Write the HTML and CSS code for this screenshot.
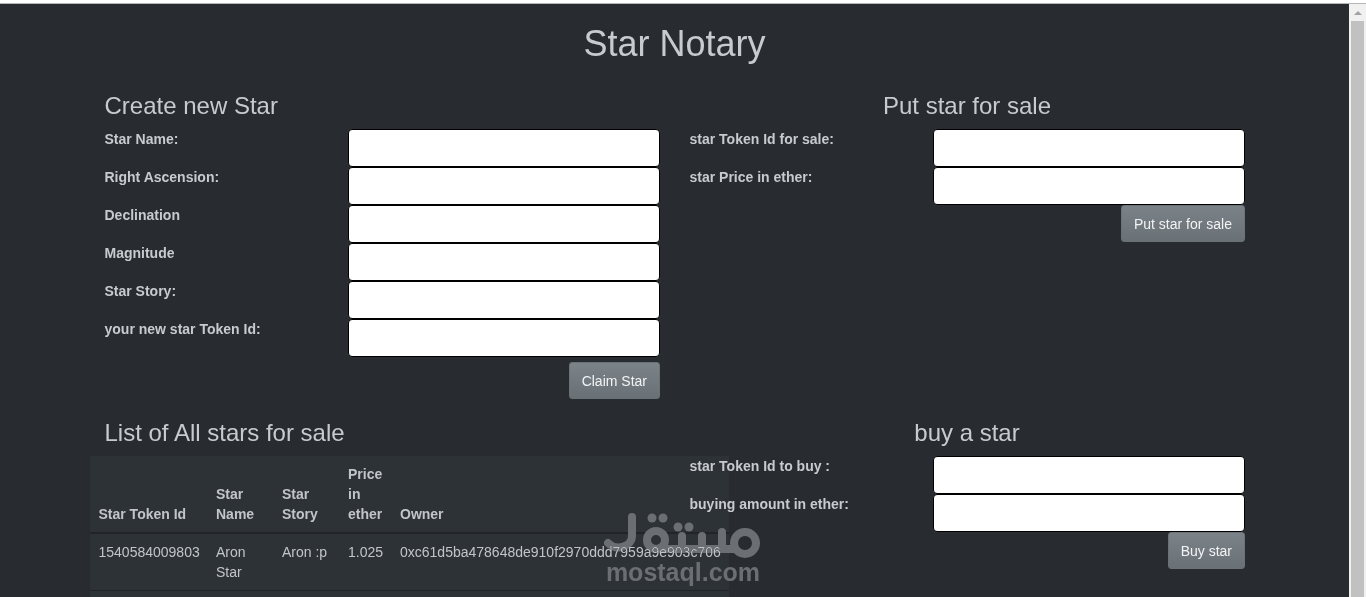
FILE: index.html
```html
<!DOCTYPE html>
<html lang="en">
<head>
<meta charset="utf-8">
<title>Star Notary</title>
<link rel="stylesheet" href="styles.css">
</head>
<body>
<div class="window">
  <div class="top-strip"></div>
  <div class="viewport">
    <main class="page">
      <h1 class="title">Star Notary</h1>
      <div class="grid">
        <section class="col">
          <h3 class="heading">Create new Star</h3>
          <div class="form-row"><label class="label">Star Name:</label><input class="field" type="text"></div>
          <div class="form-row"><label class="label">Right Ascension:</label><input class="field" type="text"></div>
          <div class="form-row"><label class="label">Declination</label><input class="field" type="text"></div>
          <div class="form-row"><label class="label">Magnitude</label><input class="field" type="text"></div>
          <div class="form-row"><label class="label">Star Story:</label><input class="field" type="text"></div>
          <div class="form-row"><label class="label">your new star Token Id:</label><input class="field" type="text"></div>
          <div class="actions actions-wide"><button class="btn" type="button">Claim Star</button></div>
        </section>
        <section class="col">
          <h3 class="heading heading-center">Put star for sale</h3>
          <div class="form-row"><label class="label">star Token Id for sale:</label><input class="field" type="text"></div>
          <div class="form-row"><label class="label">star Price in ether:</label><input class="field" type="text"></div>
          <div class="actions"><button class="btn" type="button">Put star for sale</button></div>
        </section>
        <section class="col">
          <h3 class="heading">List of All stars for sale</h3>
          <table class="table">
            <colgroup>
              <col class="c-id"><col class="c-name"><col class="c-story"><col class="c-price"><col class="c-owner">
            </colgroup>
            <thead>
              <tr><th>Star Token Id</th><th>Star Name</th><th>Star Story</th><th>Price in ether</th><th>Owner</th></tr>
            </thead>
            <tbody>
              <tr><td>1540584009803</td><td>Aron Star</td><td>Aron :p</td><td>1.025</td><td>0xc61d5ba478648de910f2970ddd7959a9e903c706</td></tr>
              <tr><td>&nbsp;</td><td></td><td></td><td></td><td></td></tr>
            </tbody>
          </table>
        </section>
        <section class="col">
          <h3 class="heading heading-center">buy a star</h3>
          <div class="form-row"><label class="label">star Token Id to buy :</label><input class="field" type="text"></div>
          <div class="form-row"><label class="label">buying amount in ether:</label><input class="field" type="text"></div>
          <div class="actions"><button class="btn" type="button">Buy star</button></div>
        </section>
      </div>
    </main>
    <aside class="scrollbar">
      <div class="scroll-arrow"></div>
      <div class="scroll-thumb"></div>
    </aside>
  </div>
</div>
<div class="watermark">
  <svg class="wm-logo" width="156" height="48" viewBox="0 0 156 48" fill="none" stroke-linecap="round" stroke-linejoin="round">
    <g class="wm-stroke">
      <path d="M28 5V24C28 34 13 40 4 31"/>
      <circle cx="52" cy="28" r="9"/>
      <path d="M57 37H130"/>
      <path d="M78 24V37M98 24V37M118 20V37"/>
      <circle cx="141" cy="31" r="11"/>
    </g>
    <g class="wm-dots">
      <circle cx="48" cy="6" r="4.5"/><circle cx="59" cy="6" r="4.5"/>
      <circle cx="74" cy="15" r="4.5"/><circle cx="85" cy="15" r="4.5"/>
    </g>
  </svg>
  <div class="wm-text">mostaql.com</div>
</div>
</body>
</html>
```
FILE: styles.css
```css
* { box-sizing: border-box; }
html, body { margin: 0; padding: 0; height: 100%; overflow: hidden; }
body {
  background: #282c31;
  color: #c8cbce;
  font-family: "Liberation Sans", Arial, sans-serif;
  font-size: 14px;
  line-height: 20px;
}
.window { display: flex; flex-direction: column; height: 597px; }
.top-strip { height: 4px; flex: none; background: #fff; border-bottom: 1px solid #b4b6b8; }
.viewport { display: flex; flex: 1; min-height: 0; }
.page { flex: 1; min-width: 0; padding-top: 18px; overflow: hidden; }
.title {
  margin: 0 0 27px;
  font-size: 36px;
  font-weight: 400;
  line-height: 43px;
  text-align: center;
}
.grid {
  display: grid;
  grid-template-columns: 585px 585px;
  justify-content: center;
  row-gap: 20px;
}
.col { padding: 0 15px; min-width: 0; }
.heading {
  margin: 0 0 10px;
  font-size: 24px;
  font-weight: 400;
  line-height: 27px;
}
.heading-center { text-align: center; }
.form-row {
  display: grid;
  grid-template-columns: 243.5px 1fr;
  height: 38px;
}
.label { font-weight: 700; color: #c8cbce; }
.field {
  display: block;
  width: 100%;
  height: 38px;
  background: #fff;
  border: 1px solid #000;
  border-radius: 4px;
  padding: 6px 12px;
}
.actions { display: flex; justify-content: flex-end; }
.actions-wide { padding-top: 5px; }
.btn {
  height: 37px;
  padding: 0 11.5px;
  font: 14px/20px "Liberation Sans", Arial, sans-serif;
  color: #f2f3f4;
  background: linear-gradient(#7b8288, #697076);
  border: 1px solid #6a7177;
  border-radius: 3px;
}
.table {
  table-layout: fixed;
  width: 639px;
  margin-left: -15px;
  border-collapse: collapse;
  background: #2d3237;
  color: #c2c5c8;
}
.c-id { width: 118.5px; }
.c-name { width: 66px; }
.c-story { width: 66px; }
.c-price { width: 52px; }
.c-owner { width: 336.5px; }
.table th, .table td { padding: 8px; text-align: left; }
.table th:first-child, .table td:first-child { padding-left: 9px; }
.table th { vertical-align: bottom; font-weight: 700; border-bottom: 2px solid #212428; }
.table td { vertical-align: top; border-bottom: 1px solid #212428; white-space: normal; }
.scrollbar {
  flex: none;
  width: 17px;
  display: flex;
  flex-direction: column;
  align-items: center;
  background: #f1f1f1;
}
.scroll-arrow {
  width: 0;
  height: 0;
  margin: 7px 0 6px;
  border-left: 4px solid transparent;
  border-right: 4px solid transparent;
  border-bottom: 4px solid #a3a3a3;
}
.scroll-thumb { flex: 1; width: 13px; background: #c1c1c1; }
.watermark {
  position: absolute;
  left: 604px;
  top: 512px;
  width: 158px;
  pointer-events: none;
  mix-blend-mode: lighten;
}
.wm-logo { display: block; }
.wm-stroke { stroke: #6b6f73; stroke-width: 8; }
.wm-dots { fill: #6b6f73; }
.wm-text {
  font-size: 25px;
  font-weight: 700;
  line-height: 24px;
  color: #6b6f73;
  text-align: center;
  white-space: nowrap;
}
```
